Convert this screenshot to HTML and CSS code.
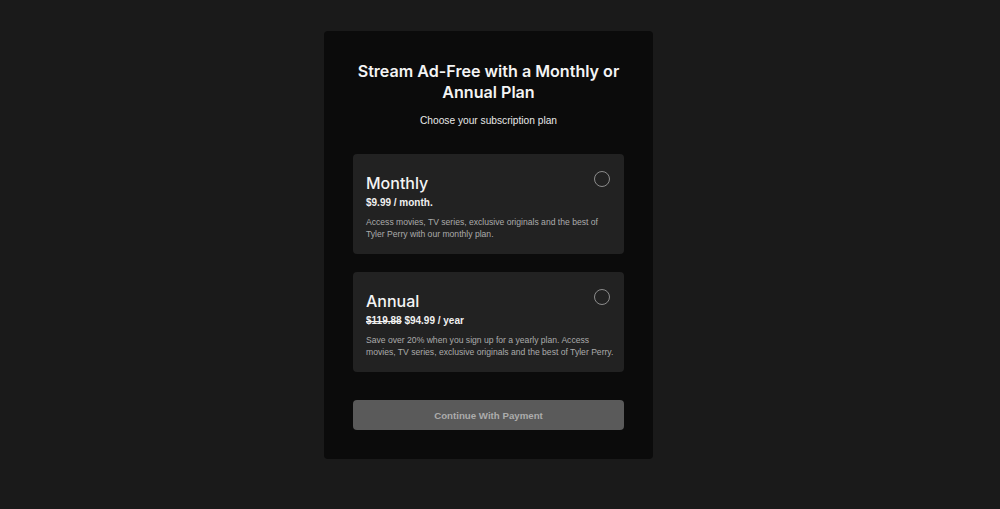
FILE: index.html
```html
<!DOCTYPE html>
<html lang="en">
<head>
<meta charset="utf-8">
<title>Choose your subscription plan</title>
<link rel="stylesheet" href="styles.css">
</head>
<body>
<main class="panel">
  <h1 class="title">Stream Ad-Free with a Monthly or Annual Plan</h1>
  <p class="subtitle">Choose your subscription plan</p>
  <div class="plans">
    <label class="plan">
      <h2 class="plan-name">Monthly</h2>
      <span class="radio"></span>
      <p class="plan-price">$9.99 / month.</p>
      <p class="plan-desc">Access movies, TV series, exclusive originals and the best of Tyler Perry with our monthly plan.</p>
    </label>
    <label class="plan">
      <h2 class="plan-name">Annual</h2>
      <span class="radio"></span>
      <p class="plan-price"><s>$119.88</s> $94.99 / year</p>
      <p class="plan-desc">Save over 20% when you sign up for a yearly plan. Access movies, TV series, exclusive originals and the best of Tyler Perry.</p>
    </label>
  </div>
  <button class="continue" type="button">Continue With Payment</button>
</main>
</body>
</html>
```
FILE: styles.css
```css
html, body {
  margin: 0;
  padding: 0;
  background: #1a1a1a;
}
body {
  font-family: "Liberation Sans", Arial, sans-serif;
  color: #f2f2f2;
  padding-top: 31px;
}
.panel {
  box-sizing: border-box;
  width: 329px;
  height: 428px;
  margin-left: 324px;
  padding: 30px 29px 0 29px;
  background: #0b0b0b;
  border-radius: 4px;
  display: flex;
  flex-direction: column;
}
.title {
  margin: 0 -6px;
  font-family: Inter, "Liberation Sans", sans-serif;
  font-weight: 600;
  font-size: 16.1px;
  line-height: 20.5px;
  text-align: center;
  color: #f4f4f4;
}
.subtitle {
  margin: 12px 0 0;
  font-size: 10.2px;
  line-height: 14px;
  text-align: center;
  color: #e8e8e8;
}
.plans {
  margin-top: 26px;
  display: flex;
  flex-direction: column;
  gap: 18px;
}
.plan {
  box-sizing: border-box;
  height: 100px;
  display: grid;
  grid-template-columns: 1fr auto;
  align-content: start;
  padding: 19px 14px 0 13px;
  background: #222222;
  border-radius: 4px;
}
.plan-name {
  margin: 0;
  font-family: Inter, "Liberation Sans", sans-serif;
  font-weight: 550;
  font-size: 16px;
  line-height: 20px;
  color: #f4f4f4;
}
.radio {
  box-sizing: border-box;
  width: 16px;
  height: 16px;
  margin-top: -2px;
  border: 1.5px solid #8c8c8c;
  border-radius: 50%;
}
.plan-price {
  grid-column: 1 / -1;
  margin: 3px 0 0;
  font-weight: 700;
  font-size: 10px;
  line-height: 14px;
  color: #f0f0f0;
}
.plan-desc {
  grid-column: 1 / -1;
  margin: 7px -4px 0 0;
  font-size: 8.6px;
  line-height: 11.5px;
  color: #ababab;
}
.continue {
  margin-top: 28px;
  height: 30px;
  border: none;
  border-radius: 4px;
  background: #5a5a5a;
  color: #acacac;
  font-family: "Liberation Sans", Arial, sans-serif;
  font-weight: 700;
  font-size: 9.7px;
}
```
